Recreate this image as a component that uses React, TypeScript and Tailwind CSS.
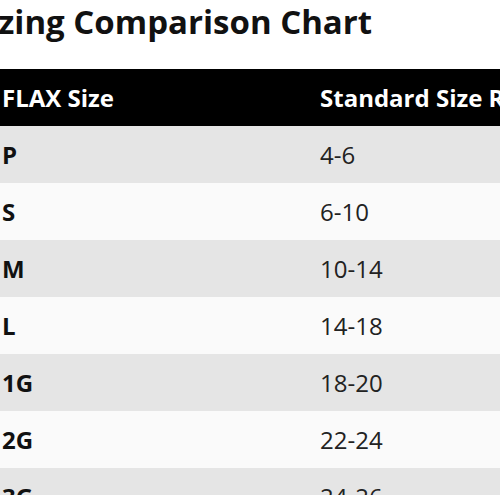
const rows: [string, string][] = [
  ['P', '4-6'],
  ['S', '6-10'],
  ['M', '10-14'],
  ['L', '14-18'],
  ['1G', '18-20'],
  ['2G', '22-24'],
  ['3G', '24-26'],
];

export default function App() {
  return (
    <div className="min-h-screen bg-white font-['Open_Sans',sans-serif] text-[#111] overflow-hidden">
      <div className="-ml-[30px] w-[760px]">
        <h2 className="text-[33px] font-bold leading-[44px] text-[#111]">
          Sizing Comparison Chart
        </h2>
        <table className="mt-[25px] ml-[16px] w-[740px] table-fixed border-collapse text-[24px]">
          <colgroup>
            <col className="w-[318px]" />
            <col />
          </colgroup>
          <thead>
            <tr className="h-[57px] bg-black text-white">
              <th className="px-4 text-left font-bold">FLAX Size</th>
              <th className="px-4 text-left font-bold">Standard Size Range</th>
            </tr>
          </thead>
          <tbody>
            {rows.map(([flax, std], i) => (
              <tr
                key={flax}
                className={`h-[57px] ${i % 2 === 0 ? 'bg-[#e5e5e5]' : 'bg-[#fafafa]'}`}
              >
                <td className="px-4 font-bold text-[#111]">{flax}</td>
                <td className="px-4 text-[#222]">{std}</td>
              </tr>
            ))}
          </tbody>
        </table>
      </div>
    </div>
  );
}
